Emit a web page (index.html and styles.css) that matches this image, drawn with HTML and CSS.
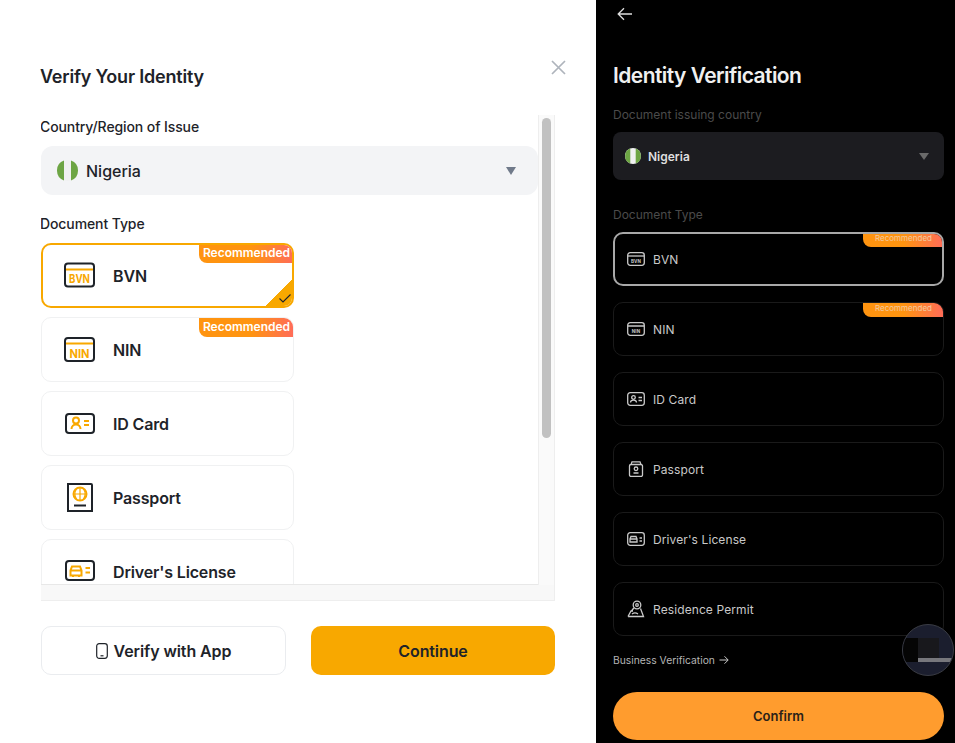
FILE: index.html
```html
<!DOCTYPE html>
<html lang="en">
  <head>
    <meta charset="UTF-8" />
    <meta name="viewport" content="width=device-width, initial-scale=1.0" />
    <title>Verify Your Identity</title>
    <link rel="stylesheet" href="styles.css">
  </head>
  <body>
    <div class="page">
      <!-- web dialog -->
      <section class="dialog">
        <div class="dialog-head">
          <h1>Verify Your Identity</h1>
          <svg class="close-icon" width="15" height="15" viewBox="0 0 15 15"><path d="M1 1l13 13M14 1L1 14" /></svg>
        </div>
        <div class="scroll-box">
          <div class="scroll-row">
            <div class="scroll-content">
              <label class="field-label">Country/Region of Issue</label>
              <div class="select">
                <svg class="flag" width="21" height="21" viewBox="0 0 21 21"><circle cx="10.500" cy="10.500" r="10.500" fill="#f0f1f1" /><path d="M7 .6A10.500 10.500 0 0 0 7 20.400zM14 .6a10.500 10.500 0 0 1 0 19.800z" fill="#6da544" /></svg>
                <span class="select-name">Nigeria</span>
                <span class="caret"></span>
              </div>
              <label class="field-label doc-label">Document Type</label>
              <div class="doc-list">
                <div class="doc-card selected">
                  <span class="badge">Recommended</span>
                  <svg class="doc-icon" width="32" height="28" viewBox="0 0 32 28">
                    <rect x="1" y="1.500" width="29" height="23" rx="3" class="ink" />
                    <path d="M2 7.500h27" class="amber" />
                    <text x="15.500" y="20.500" textLength="21" lengthAdjust="spacingAndGlyphs" class="icon-text">BVN</text>
                  </svg>
                  <span class="doc-name">BVN</span>
                  <span class="corner">
                    <svg width="12" height="9" viewBox="0 0 12 9"><path d="M.5 4.500l3.500 3.500 7.500-7.500" class="tick" /></svg>
                  </span>
                </div>
                <div class="doc-card">
                  <span class="badge">Recommended</span>
                  <svg class="doc-icon" width="32" height="28" viewBox="0 0 32 28">
                    <rect x="1" y="2" width="29" height="23" rx="3" class="ink" />
                    <path d="M2 7.500h27" class="amber" />
                    <text x="15.500" y="21.500" textLength="20" lengthAdjust="spacingAndGlyphs" class="icon-text">NIN</text>
                  </svg>
                  <span class="doc-name">NIN</span>
                </div>
                <div class="doc-card">
                  <svg class="doc-icon" width="32" height="28" viewBox="0 0 32 28">
                    <rect x="2" y="4" width="28" height="19" rx="3" class="ink" />
                    <circle cx="12" cy="10.500" r="3" class="amber" />
                    <path d="M7.500 19c0-6 9-6 9 0M20 11h5M20 15h5" class="amber" />
                  </svg>
                  <span class="doc-name">ID Card</span>
                </div>
                <div class="doc-card">
                  <svg class="doc-icon" width="32" height="32" viewBox="0 0 32 32">
                    <path d="M4 2h23a1 1 0 0 1 1 1v26H4z" class="ink" />
                    <circle cx="16" cy="12" r="6.500" class="amber" />
                    <path d="M9.500 12h13M16 5.500v13M12.500 7c-2 3-2 7 0 10M19.500 7c2 3 2 7 0 10" class="amber thin" />
                    <path d="M10 23.500h12" class="ink" />
                  </svg>
                  <span class="doc-name">Passport</span>
                </div>
                <div class="doc-card">
                  <svg class="doc-icon" width="32" height="28" viewBox="0 0 32 28">
                    <rect x="2" y="3" width="28" height="19" rx="3" class="ink" />
                    <path d="M8 8.500h8l1.500 4v5H6.500v-5zM6.500 12.500h11M9 17.500v1.500M15 17.500v1.500" class="amber" />
                    <path d="M21.500 10h4.500M21.500 14.500h4.500" class="amber" />
                  </svg>
                  <span class="doc-name">Driver's License</span>
                </div>
              </div>
            </div>
            <div class="v-track"><div class="v-thumb"></div></div>
          </div>
          <div class="h-track"></div>
        </div>
        <div class="dialog-actions">
          <button class="btn btn-app">
            <svg width="12" height="16" viewBox="0 0 12 16"><rect x=".7" y=".7" width="10.600" height="14.600" rx="2.500" class="ink thin" /><path d="M4.500 12.800h3" class="ink thin" /></svg>
            Verify with App
          </button>
          <button class="btn btn-continue">Continue</button>
        </div>
      </section>

      <!-- mobile screen -->
      <section class="phone">
        <svg class="back-icon" width="16" height="14" viewBox="0 0 16 14"><path d="M15 7H1.500M7 1.200L1.200 7 7 12.800" /></svg>
        <h2>Identity Verification</h2>
        <div class="phone-label">Document issuing country</div>
        <div class="phone-select">
          <svg width="16" height="16" viewBox="0 0 16 16"><circle cx="8" cy="8" r="8" fill="#f0f1f1" /><path d="M5.300.5A8 8 0 0 0 5.300 15.500zM10.700.5a8 8 0 0 1 0 15z" fill="#6da544" /></svg>
          <span class="phone-select-name">Nigeria</span>
          <span class="phone-caret"></span>
        </div>
        <div class="phone-label phone-doc-label">Document Type</div>
        <div class="phone-list">
          <div class="phone-card active">
            <span class="phone-badge">Recommended</span>
            <svg width="18" height="14" viewBox="0 0 18 14"><rect x=".7" y=".7" width="16.600" height="12.600" rx="2.500" class="line" /><path d="M1 4h16" class="line" /><text x="9" y="10.500" class="phone-icon-text">BVN</text></svg>
            BVN
          </div>
          <div class="phone-card">
            <span class="phone-badge">Recommended</span>
            <svg width="18" height="14" viewBox="0 0 18 14"><rect x=".7" y=".7" width="16.600" height="12.600" rx="2.500" class="line" /><path d="M1 4h16" class="line" /><text x="9" y="10.500" class="phone-icon-text">NIN</text></svg>
            NIN
          </div>
          <div class="phone-card">
            <svg width="18" height="14" viewBox="0 0 18 14"><rect x=".7" y=".7" width="16.600" height="12.600" rx="2.500" class="line" /><circle cx="6.500" cy="5.500" r="1.800" class="line" /><path d="M3.500 10.500c0-3.300 6-3.300 6 0M11.500 5.500h3.500M11.500 8.500h3.500" class="line" /></svg>
            ID Card
          </div>
          <div class="phone-card">
            <svg width="18" height="16" viewBox="0 0 18 16"><path d="M4 3.500h10a1.500 1.500 0 0 1 1.500 1.500v9a1.500 1.500 0 0 1-1.500 1.500H4A1.500 1.500 0 0 1 2.500 14V5A1.500 1.500 0 0 1 4 3.500zM4 3.500L5 .8h8l1 2.700" class="line" /><circle cx="9" cy="7.800" r="1.800" class="line" /><path d="M6.500 12h5" class="line" /></svg>
            Passport
          </div>
          <div class="phone-card">
            <svg width="18" height="14" viewBox="0 0 18 14"><rect x=".7" y=".7" width="16.600" height="12.600" rx="2.500" class="line" /><path d="M4 4.500h5l1 2.500v3H3V7zM3 7h7M12.500 6h2.500M12.500 9h2.500" class="line" /></svg>
            Driver's License
          </div>
          <div class="phone-card">
            <svg width="18" height="18" viewBox="0 0 18 18"><circle cx="10" cy="5" r="3.800" class="line" /><circle cx="10" cy="5" r="1.300" class="line" /><path d="M6.800 8L4.500 11M1 16.500l3-5.500h2M13.500 8.500L16.500 16.500H1M5 14c2-1.500 4-1.500 6 0" class="line" /></svg>
            Residence Permit
          </div>
        </div>
        <div class="business-link">
          Business Verification
          <svg width="10" height="10" viewBox="0 0 10 10"><path d="M.5 5h8.500M5.500 1.300L9.200 5 5.500 8.700" /></svg>
        </div>
        <button class="confirm-btn">Confirm</button>
        <div class="float-circle">
          <span class="float-dark"></span>
          <span class="float-mid"></span>
          <span class="float-bar"></span>
        </div>
      </section>
    </div>
  </body>
</html>
```

FILE: styles.css
```css
* {
  box-sizing: border-box;
}
body {
  margin: 0;
  padding: 0;
  background-color: #fff;
  font-family: "Inter", "Liberation Sans", sans-serif;
}
h1,
h2 {
  margin: 0;
}
.page {
  display: flex;
  width: 955px;
  height: 743px;
  overflow: hidden;
}

/* left dialog */
.dialog {
  width: 596px;
  flex-shrink: 0;
  padding: 57px 41px 0 41px;
  color: #1e2329;
}
.dialog-head {
  display: flex;
  justify-content: space-between;
  align-items: center;
  height: 38px;
}
.dialog-head h1 {
  margin-left: -1px;
  font-size: 18px;
  font-weight: 600;
  letter-spacing: -0.2px;
}
.close-icon {
  margin: -18px -11px 0 0;
}
.close-icon path {
  fill: none;
  stroke: #aeb4bc;
  stroke-width: 1.7;
}
.scroll-box {
  margin-top: 20px;
  height: 486px;
  display: flex;
  flex-direction: column;
}
.scroll-row {
  flex: 1;
  min-height: 0;
  display: flex;
}
.scroll-content {
  flex: 1;
  min-width: 0;
  overflow: hidden;
  padding-top: 3px;
  border-bottom: 1px solid #e8e8e8;
}
.field-label {
  display: block;
  margin-left: -1px;
  font-size: 14px;
  line-height: 18px;
  font-weight: 500;
  letter-spacing: -0.1px;
}
.select {
  display: flex;
  align-items: center;
  height: 49px;
  margin-top: 10px;
  padding: 0 22px 0 16px;
  background-color: #f3f4f6;
  border-radius: 12px;
}
.select-name {
  margin-left: 8px;
  font-size: 16px;
  font-weight: 500;
}
.caret {
  margin-left: auto;
  border-left: 5.500px solid transparent;
  border-right: 5.500px solid transparent;
  border-top: 8px solid #707a8a;
}
.doc-label {
  margin-top: 20px;
}
.doc-list {
  display: flex;
  flex-direction: column;
  gap: 9px;
  margin-top: 10px;
}
.doc-card {
  position: relative;
  display: flex;
  align-items: center;
  flex-shrink: 0;
  width: 253px;
  height: 65px;
  padding-left: 22px;
  border: 1px solid #f0f1f2;
  border-radius: 10px;
  overflow: hidden;
}
.doc-card.selected {
  border: 2px solid #f8a800;
  padding-left: 21px;
}
.doc-icon {
  flex-shrink: 0;
}
.doc-name {
  position: absolute;
  left: 71px;
  font-size: 16px;
  font-weight: 600;
  letter-spacing: -0.15px;
}
.selected .doc-name {
  left: 70px;
}
.badge {
  position: absolute;
  top: -1px;
  right: -1px;
  width: 95px;
  height: 20px;
  line-height: 19px;
  text-align: center;
  color: #fff;
  font-size: 12px;
  font-weight: 600;
  background: linear-gradient(90deg, #ff9410 0%, #ff9410 55%, #ff6b5a 100%);
  border-bottom-left-radius: 8px;
}
.selected .badge {
  top: -2px;
  right: -2px;
}
.corner {
  position: absolute;
  right: -2px;
  bottom: -2px;
  width: 31px;
  height: 31px;
  background: linear-gradient(135deg, transparent 50%, #f8a800 50%);
}
.corner svg {
  position: absolute;
  right: 3px;
  bottom: 5px;
}
.tick {
  fill: none;
  stroke: #1e2329;
  stroke-width: 1.100;
}
.ink {
  fill: none;
  stroke: #1e2329;
  stroke-width: 2;
}
.amber {
  fill: none;
  stroke: #f8a800;
  stroke-width: 2;
}
.thin {
  stroke-width: 1.200;
}
.icon-text {
  fill: #f8a800;
  font-size: 12px;
  font-weight: 700;
  text-anchor: middle;
}
.v-track {
  position: relative;
  width: 17px;
  flex-shrink: 0;
  background-color: #fafafa;
  border-left: 1px solid #eeeeee;
  border-right: 1px solid #eeeeee;
}
.v-thumb {
  position: absolute;
  top: 3px;
  left: 3px;
  width: 9px;
  height: 320px;
  border-radius: 4.500px;
  background-color: #c1c1c1;
}
.h-track {
  height: 16px;
  flex-shrink: 0;
  background-color: #f8f8f8;
  border-bottom: 1px solid #eeeeee;
  border-right: 1px solid #eeeeee;
}
.dialog-actions {
  display: flex;
  justify-content: space-between;
  margin-top: 25px;
}
.btn {
  display: flex;
  align-items: center;
  justify-content: center;
  gap: 6px;
  width: 245px;
  height: 49px;
  padding: 0;
  color: #1e2329;
  font-family: inherit;
  font-size: 16px;
  font-weight: 600;
  letter-spacing: -0.1px;
  border-radius: 10px;
}
.btn-app {
  background-color: #fff;
  border: 1px solid #eaecef;
}
.btn-continue {
  width: 244px;
  background-color: #f8a800;
  border: none;
}

/* right phone screen */
.phone {
  position: relative;
  flex: 1;
  padding: 0 11px 0 17px;
  background-color: #000;
  color: #c9c9c9;
}
.back-icon {
  display: block;
  margin: 7px 0 0 4px;
}
.back-icon path {
  fill: none;
  stroke: #dddddd;
  stroke-width: 1.300;
}
.phone h2 {
  margin-top: 39px;
  color: #f0f0f0;
  font-size: 21px;
  line-height: 32px;
  font-weight: 600;
  letter-spacing: -0.55px;
}
.phone-label {
  margin-top: 15px;
  color: #4b4b4b;
  font-size: 12px;
  line-height: 16px;
}
.phone-select {
  display: flex;
  align-items: center;
  height: 48px;
  margin-top: 9px;
  padding: 0 15px 0 12px;
  background-color: #1c1c20;
  border-radius: 8px;
}
.phone-select-name {
  margin-left: 7px;
  color: #dedede;
  font-size: 12px;
  font-weight: 600;
}
.phone-caret {
  margin-left: auto;
  border-left: 5px solid transparent;
  border-right: 5px solid transparent;
  border-top: 7px solid #6a6a6a;
}
.phone-doc-label {
  margin-top: 27px;
}
.phone-list {
  display: flex;
  flex-direction: column;
  gap: 16px;
  margin-top: 9px;
}
.phone-card {
  position: relative;
  display: flex;
  align-items: center;
  gap: 8px;
  height: 54px;
  padding-left: 13px;
  font-size: 12px;
  letter-spacing: 0.1px;
  border: 1px solid #1a1a1a;
  border-radius: 10px;
  overflow: hidden;
}
.phone-card.active {
  border: 2px solid #a8a8a8;
  padding-left: 12px;
}
.phone-badge {
  position: absolute;
  top: -1px;
  right: -1px;
  width: 81px;
  height: 15px;
  line-height: 13px;
  text-align: center;
  color: #f3c9a0;
  font-size: 8px;
  letter-spacing: 0;
  background: linear-gradient(90deg, #ff9410 0%, #ff9410 50%, #ff6b5a 100%);
  border-bottom-left-radius: 8px;
}
.active .phone-badge {
  top: -2px;
  right: -2px;
}
.line {
  fill: none;
  stroke: #c9c9c9;
  stroke-width: 1.300;
}
.phone-icon-text {
  fill: #c9c9c9;
  font-size: 4.500px;
  font-weight: 700;
  text-anchor: middle;
}
.business-link {
  display: flex;
  align-items: center;
  gap: 4px;
  margin-top: 17px;
  height: 14px;
  font-size: 10.300px;
  color: #b5b5b5;
}
.business-link svg path {
  fill: none;
  stroke: #c9c9c9;
  stroke-width: 1;
}
.confirm-btn {
  display: block;
  width: 100%;
  height: 48px;
  margin-top: 25px;
  padding: 0;
  border: none;
  border-radius: 24px;
  background-color: #ff9c2e;
  color: #2a2118;
  font-family: inherit;
  font-size: 13px;
  font-weight: 600;
}
.float-circle {
  position: absolute;
  left: 306px;
  top: 624px;
  width: 52px;
  height: 52px;
  border-radius: 50%;
  background-color: #1b1e2e;
  border: 1px solid #3a3c44;
  overflow: hidden;
}
.float-dark {
  position: absolute;
  left: 0;
  top: 13px;
  width: 15px;
  height: 24px;
  background-color: #050505;
}
.float-mid {
  position: absolute;
  left: 15px;
  top: 13px;
  width: 21px;
  height: 20px;
  background-color: #18181c;
}
.float-bar {
  position: absolute;
  left: 15px;
  top: 33px;
  width: 36px;
  height: 4px;
  background-color: #77777c;
}
```
